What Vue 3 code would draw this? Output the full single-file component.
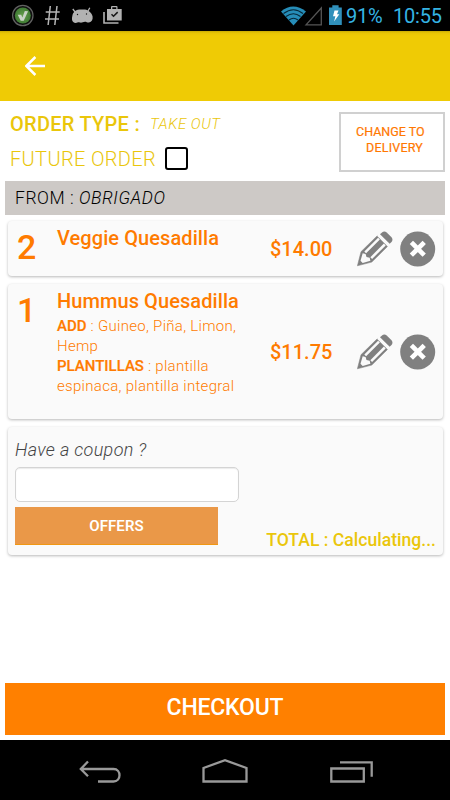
<script setup>
const items = [
  { qty: 2, name: 'Veggie Quesadilla', price: '$14.00', extras: [] },
  {
    qty: 1,
    name: 'Hummus Quesadilla',
    price: '$11.75',
    extras: [
      { label: 'ADD', value: 'Guineo, Piña, Limon, Hemp' },
      { label: 'PLANTILLAS', value: 'plantilla espinaca, plantilla integral' },
    ],
  },
]
</script>

<template>
  <div class="screen">
    <div class="status">
      <svg class="notifications" width="130" height="31" viewBox="0 0 130 31">
        <defs>
          <radialGradient id="badge"><stop offset="0" stop-color="#659d4c" /><stop offset="1" stop-color="#407c34" /></radialGradient>
        </defs>
        <circle cx="22.8" cy="15.5" r="10.2" fill="#101010" stroke="#626262" stroke-width="1.2" />
        <circle cx="22.8" cy="15.5" r="8" fill="url(#badge)" />
        <path d="M17.700 14.700l3.500.1 1.200 2.600 2.400-6.400 3.300.2-4.400 9.600h-3z" fill="#c9d3c5" />
        <path d="M50.300 6l-2.200 19M57 6l-2.200 19M45.700 12h14M45 19h14" fill="none" stroke="#b5b5b5" stroke-width="1.500" />
        <path d="M73 13.500c1.500-2.500 4-4 6.700-4h5.300c3.300.7 6.700 3 7.600 7 .4 3-.9 5.500-3.600 6-1.500.3-2.500-.7-4-.7-2 0-3 1.200-5 .8-1.200-.2-1.800-.6-2.500 0-2.500 1.200-5.200-.3-5.500-3-.1-2 .4-4.500 1-6.100z" fill="#b2b2b2" />
        <path d="M75.500 12.500L72.800 9M88 11l1.800-3.300" stroke="#b2b2b2" stroke-width="1.300" />
        <circle cx="77.500" cy="14.500" r=".7" fill="#171717" /><circle cx="86.500" cy="14" r=".7" fill="#171717" />
        <path d="M104 12v11h14.500" fill="none" stroke="#b2b2b2" stroke-width="1.600" />
        <path fill-rule="evenodd" d="M107 9h4V7q0-1 1-1h4.500q1 0 1 1v2h4.200v11.500H107zM112.300 9h4V7.300h-4z" fill="#b2b2b2" />
        <path d="M111.500 14.300l2 2 4.200-4.200" fill="none" stroke="#171717" stroke-width="1.500" />
      </svg>
      <div class="system">
        <svg width="64" height="31" viewBox="280 0 64 31">
          <path d="M281 11.500Q293 1.500 306 11.500L293.500 25.500Z" fill="#268db8" />
          <path d="M283.500 13.500Q293.500 6 303 13.500M286 16.500Q293.500 11 300.500 16.500M289 20Q293.500 16.500 298 20" fill="none" stroke="#06283a" stroke-width="1.100" />
          <path d="M306 24.900L321.300 8v16.900z" fill="none" stroke="#565656" stroke-width="1.300" />
          <path d="M329 7.500h3.300V5.200h6.300v2.300h3.200V25H329z" fill="#3090bb" />
          <path d="M334.500 10.500h4l-1.500 3.700h2.300l-5.200 7.300 1.300-5.200H333z" fill="#fff" />
        </svg>
        <span class="level">91%</span>
        <span class="clock">10:55</span>
      </div>
    </div>

    <header class="bar">
      <svg width="20" height="20" viewBox="0 0 20 20"><path d="M20 10H2M10.400 1L1.300 10l9.100 9" fill="none" stroke="#fff" stroke-width="2.500" /></svg>
    </header>

    <main class="content">
      <section class="order">
        <div>
          <div class="type"><b>ORDER TYPE :</b><i>TAKE OUT</i></div>
          <label class="future"><span>FUTURE ORDER</span><span class="check"></span></label>
        </div>
        <button class="change"><span>CHANGE TO</span><span class="second">DELIVERY</span></button>
      </section>

      <div class="from"><span>FROM : <i>OBRIGADO</i></span></div>

      <article v-for="item in items" :key="item.name" class="card item" :class="{ tall: item.extras.length }">
        <div class="qty">{{ item.qty }}</div>
        <div class="detail">
          <h2>{{ item.name }}</h2>
          <p v-for="extra in item.extras" :key="extra.label"><b>{{ extra.label }}</b> : {{ extra.value }}</p>
        </div>
        <div class="price">{{ item.price }}</div>
        <svg class="pencil" width="36" height="36" viewBox="0 0 36 36">
          <path d="M.4 34.800L4 20.700 21 4 31.500 14.500 14.800 31.100z" fill="#808080" stroke="#808080" stroke-width=".5" stroke-linejoin="round" />
          <path d="M5.700 22.200l2.900.7.900 3 3.200.9.700 2.900-7.700 2.200-2.200-2.200z" fill="#fafafa" />
          <path d="M8.200 21.300L22 7.700M14.200 27.100L27.800 13.500" fill="none" stroke="#fafafa" stroke-width="2.500" />
          <path d="M20.700 4L32 15.300" stroke="#fafafa" stroke-width="2.200" />
          <path d="M24.700 1.700q2.500-2.200 5-.3l4.600 4.600q2.200 2.600.2 5l-1.800 1.700L23 3.300z" fill="#808080" />
        </svg>
        <svg class="remove" width="36" height="36" viewBox="0 0 36 36">
          <circle cx="17.700" cy="18" r="17.500" fill="#808080" />
          <path d="M13 13l9.600 9.600M22.600 13L13 22.600" stroke="#fff" stroke-width="4.600" stroke-linecap="square" />
        </svg>
      </article>

      <section class="card coupon">
        <div class="question">Have a coupon ?</div>
        <input type="text" aria-label="Coupon" />
        <div class="summary">
          <button class="offers"><span>OFFERS</span></button>
          <div class="total">TOTAL : Calculating...</div>
        </div>
      </section>

      <button class="checkout"><span>CHECKOUT</span></button>
    </main>

    <nav class="nav">
      <svg width="450" height="60" viewBox="0 740 450 60" fill="none" stroke="#999" stroke-width="2.300">
        <path d="M88 761.500L80.800 769l7.200 7.300M81 769h32.500c8 0 8 12.500 0 12.500H98" />
        <path d="M203.500 781.500V768l21.500-7.800 21.500 7.800v13.500z" />
        <path d="M331.300 768.500h32.500v13h-32.500zM340 762.300h31.700v14.500" />
      </svg>
    </nav>
  </div>
</template>

<style>
body { margin: 0; background: #fff; }
</style>

<style scoped>
.screen { width: 450px; height: 800px; display: flex; flex-direction: column; font-family: Roboto, "Liberation Sans", sans-serif; overflow: hidden; background: #fff; }
.screen * { box-sizing: border-box; }
button { font-family: inherit; padding: 0; border: 0; border-radius: 0; }
svg { display: block; flex: none; }
.status { height: 31px; flex: none; background: #000; display: flex; justify-content: space-between; }
.system { display: flex; width: 170px; color: #35b4e4; font-size: 20px; line-height: 32px; white-space: nowrap; }
.level { width: 49px; padding-left: 2px; letter-spacing: -.3px; }
.clock { letter-spacing: -.2px; }
.bar { height: 70px; flex: none; background: linear-gradient(#c9aa04, #e8c505 2px, #efcb05 5px); padding: 25px; }
.content { height: 639px; flex: none; padding: 0 5px 5px; display: flex; flex-direction: column; }
.order { height: 80px; flex: none; display: flex; justify-content: space-between; color: #eac60b; padding: 11px 0 0 5px; }
.type { height: 25px; line-height: 25px; font-size: 20px; display: flex; white-space: nowrap; }
.type b { width: 140px; font-weight: 500; letter-spacing: .27px; }
.type i { font-size: 15px; font-weight: 300; letter-spacing: .5px; }
.future { height: 42px; display: flex; line-height: 44px; font-size: 20px; font-weight: 300; letter-spacing: .35px; }
.future > span:first-child { width: 155px; }
.check { width: 23px; height: 23px; margin-top: 10px; border: 2px solid #000; border-radius: 3px; }
.change { width: 106px; height: 60px; background: #fff; border: 2px solid #d0d0d0; color: #ff7800; font-size: 12.500px; line-height: 16px; display: flex; flex-direction: column; padding: 10px 0 0 15px; text-align: left; -webkit-text-stroke: .2px #ff7800; }
.change .second { padding-left: 10px; letter-spacing: .2px; }
.from { height: 34px; flex: none; background: #cdc9c6; padding-left: 10px; color: #000; font-size: 17.500px; font-weight: 300; letter-spacing: .55px; line-height: 34px; margin-bottom: 6px; }
.card { background: #fafafa; border-radius: 4px; margin: 0 2px 0 3px; box-shadow: 0 1px 3px rgba(0,0,0,.28); flex: none; }
.item { height: 55px; display: flex; align-items: center; margin-bottom: 8px; color: #ff7b00; }
.item.tall { height: 135px; }
.qty { width: 49px; padding-left: 9px; align-self: flex-start; font-size: 34px; font-weight: 500; line-height: 40px; padding-top: 6px; }
.detail { width: 213px; align-self: flex-start; padding-top: 4px; }
.detail h2 { margin: 0 0 2px; font-size: 20px; font-weight: 500; line-height: 26px; letter-spacing: .08px; white-space: nowrap; }
.detail p { margin: 0; width: 190px; font-size: 15px; font-weight: 300; line-height: 20px; letter-spacing: .3px; }
.detail p b { font-weight: 500; letter-spacing: 0; -webkit-text-stroke: .2px #ff7b00; }
.price { width: 87px; font-size: 20px; font-weight: 500; }
.pencil { margin-right: 6.500px; }
.coupon { height: 128px; padding: 9px 7px 0; }
.question { font-size: 18px; font-style: italic; font-weight: 300; line-height: 28px; letter-spacing: .33px; color: #444; }
input { display: block; width: 224px; height: 35px; margin: 3px 0 5px; border: 1px solid #d4d4d4; border-radius: 5px; background: #fff; outline: 0; box-shadow: inset 0 1px 1px rgba(0,0,0,.08); }
.summary { display: flex; justify-content: space-between; height: 44px; }
.offers { width: 203px; height: 38px; background: #ea9848; color: #fff; font-size: 15px; font-weight: 600; letter-spacing: .1px; border-bottom: 1px solid #f19712; }
.total { color: #eac60b; font-size: 17.600px; font-weight: 500; line-height: 22px; padding-top: 22px; white-space: nowrap; }
.checkout { height: 52px; flex: none; margin-top: auto; background: #ff8000; color: #fff; font-size: 23px; font-weight: 500; letter-spacing: -.2px; padding-bottom: 4px; }
.nav { height: 60px; flex: none; background: #000; }
</style>
